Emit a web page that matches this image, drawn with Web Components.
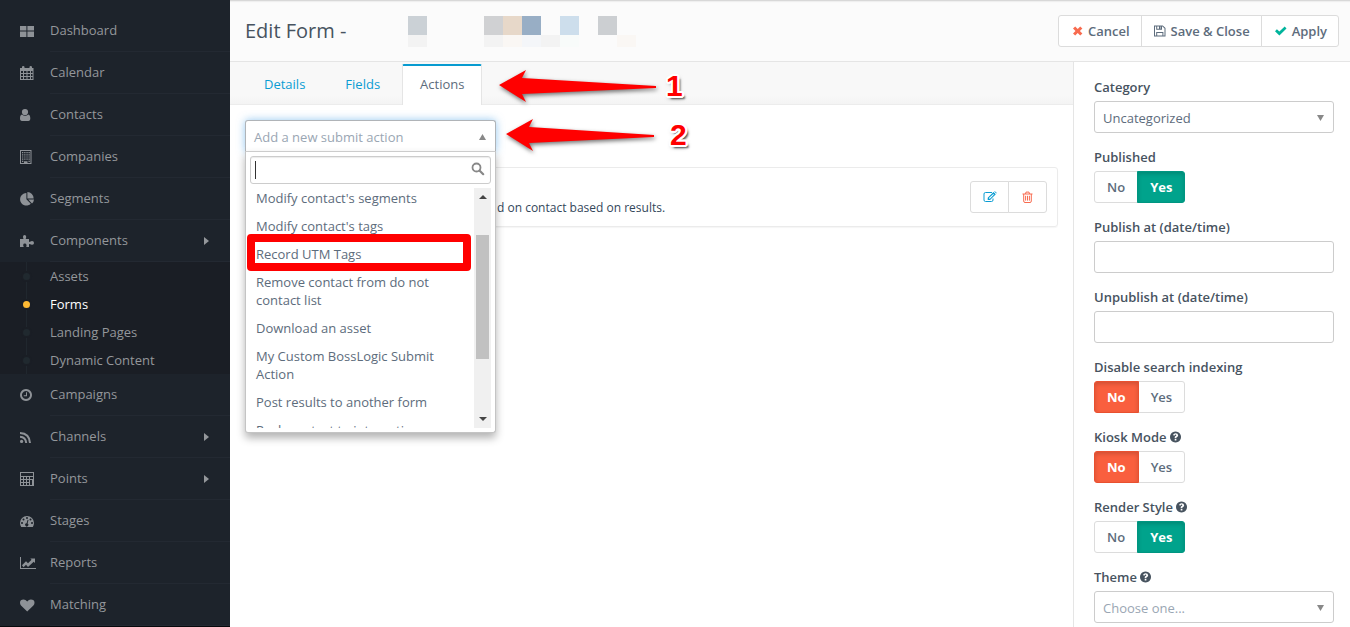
<!DOCTYPE html>
<html lang="en">
<head>
<meta charset="utf-8">
<title>Edit Form</title>
<style>
    body{
        margin:0;
        font:13px/18px "Open Sans", "Liberation Sans", sans-serif;
        color:#5d6c7c;
        background:#fff;
    }
</style>
</head>
<body>
<form-app></form-app>

<script>
const ICONS = {
    dashboard: [14,14,'<path d="M0 2h6.4v4.6H0zM7.4 2H14v4.6H7.4zM0 7.6h6.4V13H0zM7.4 7.6H14V13H7.4z"/>'],
    calendar: [14,14,'<path fill-rule="evenodd" d="M0 2h2V1q0-1 1.2-1T4.500 1v1h5V1q0-1 1.200-1T12 1v1h1.500v12H0zM1 5v2h2V5zm3 0v2h2.500V5zm3.500 0v2H10V5zM11 5v2h1.500V5zM1 8v2h2V8zm3 0v2h2.500V8zm3.500 0v2H10V8zM11 8v2h1.500V8zM1 11v2h2v-2zm3 0v2h2.500v-2zm3.500 0v2H10v-2zm3.500 0v2h1.500v-2z"/>'],
    user: [14,14,'<circle cx="5" cy="4" r="3.100"/><path d="M2 6.500C.5 6.800 0 8.500 0 10.500c0 1.500.6 2.500 2 2.500h6.300c1.400 0 2-1 2-2.500 0-2-.5-3.700-2-4A4.500 4.500 0 0 1 2 6.500z"/>'],
    building: [14,14,'<path fill-rule="evenodd" d="M0 0h11.500v14H0zM1 1v12h3v-1.800h3.500V13h3V1z"/><path d="M2 2h1.300v1.200H2zm2.200 0h1.300v1.200H4.200zm2.200 0h1.300v1.200H6.400zm2.100 0h1.300v1.200H8.500zM2 4.200h1.300v1.200H2zm2.200 0h1.300v1.200H4.200zm2.200 0h1.300v1.200H6.400zm2.100 0h1.300v1.200H8.500zM2 6.400h1.300v1.200H2zm2.200 0h1.300v1.200H4.200zm2.200 0h1.300v1.200H6.400zm2.100 0h1.300v1.200H8.500zM2 8.600h1.300v1.200H2zm2.200 0h1.300v1.200H4.200zm2.200 0h1.300v1.200H6.400zm2.100 0h1.300v1.200H8.500zM2 10.800h1.300V12H2zm6.500 0h1.300V12H8.500z"/>'],
    pie: [14,14,'<path d="M6.400 1v6.300l4.400 4.500A6.300 6.300 0 1 1 6.400 1z"/><path d="M7.400 0A6.400 6.400 0 0 1 13.700 6.400H7.400z"/><path d="M8.200 7.400H14a6 6 0 0 1-2 4z"/>'],
    puzzle: [14,14,'<path d="M0 5h3.600Q3 4 3 2.800 3 1 4.600 1T6.200 2.800Q6.200 4 5.600 5H9v3q1-.5 1.500-.5L12 7q2 0 2 2t-2 1.800q-1.500 0-2-.8-1-.4-1 .5V13H6.200q.5-1 .3-2-.2-1.400-1.700-1.400T3.200 11q0 1 .6 2H0z"/>'],
    clock: [14,14,'<path fill-rule="evenodd" d="M6 1a6 6 0 1 0 .01 0zm0 2a4 4 0 1 1-.01 0zM6 4.200v3H3.800v1H7v-4z"/>'],
    rss: [14,14,'<circle cx="1.600" cy="11.400" r="1.600"/><path fill="none" stroke="currentColor" stroke-width="2" d="M0 6.800q5.700.4 6.200 6.200M0 3q9.500.4 10 10"/>'],
    calculator: [14,14,'<path fill-rule="evenodd" d="M0 0h14v14H0zM1 1v3h12V1zm0 4v2h2V5zm3 0v2h2V5zm3 0v2h2V5zm3 0v2h3V5zM1 8v2h2V8zm3 0v2h2V8zm3 0v2h2V8zm3 0v5h2V8zM1 11v2h2v-2zm3 0v2h2v-2zm3 0v2h2v-2z"/>'],
    gauge: [14,14,'<path fill-rule="evenodd" d="M0 9a7 7 0 0 1 14 0q0 2.200-1.200 4H1.200Q0 11.200 0 9zm2-.9a1 1 0 1 0 .01 2 1 1 0 0 0 0-2zM3.500 4.500a1 1 0 1 0 .01 2 1 1 0 0 0 0-2zM7 3a1 1 0 1 0 .01 2A1 1 0 0 0 7 3zm3.500 1.500a1 1 0 1 0 .01 2 1 1 0 0 0 0-2zM12 8.100a1 1 0 1 0 .01 2 1 1 0 0 0 0-2zM7.600 5.700l-1 3.600a1.600 1.600 0 1 0 1 .2l.9-3.500z"/>'],
    chart: [16,14,'<path d="M0 1h1v11h15v1H0z"/><path d="M2 9.200l4-4 2 2 3.500-3.500L10.300 2.500H15V7l-1.300-1.200L8 11 6 8.800l-2.500 2.500z"/>'],
    heart: [15,14,'<path d="M7.200 13.500L1 7.600Q0 6.400 0 4.800 0 1.500 3.600 1.500q2 0 3.600 2 1.600-2 3.600-2 3.700 0 3.700 3.300 0 1.600-1.100 2.800z"/>'],
    times: [10,10,'<path d="M0 2.500L2.200.5 4.700 3 7.200.5l2.200 2L6.900 5l2.500 2.500-2.200 2-2.500-2.500-2.500 2.500L0 7.500 2.500 5z"/>'],
    save: [12,12,'<path fill-rule="evenodd" d="M0 .5h8.800L11.500 3v8.500H0zm1 1v9h1.200V7h7.200v3.500h1.100V3.400L8.500 1.500H8v3.300H2.200V1.500zm2.200 0v2.300H5V1.500zm3.300 0v2.300H7V1.500zM3.200 8v2.500h5.200V8z"/>'],
    check: [12,10,'<path d="M0 5.200l1.900-1.900 2.500 2.300L9.700.5l1.800 1.900-7.100 7.100z"/>'],
    edit: [14,12,'<path fill="none" stroke="currentColor" d="M9 1.500H2.500q-1.500 0-1.500 1.500v6q0 1.500 1.500 1.500h6q1.500 0 1.500-1.500V7.500"/><path fill-rule="evenodd" d="M4.700 9V6.700L10.500 1l2.300 2.200L7 9zm1.200-1.900.8.800 4.300-4.300-.7-.7zM11.200.4q.5-.5 1 0l1.200 1.200q.5.500 0 1z"/>'],
    trash: [12,12,'<path fill="none" stroke="currentColor" d="M.5 3h10M3.500 3l.5-1.900h3L7.500 3M1.700 3v7q0 1.500 1.300 1.500h5q1.300 0 1.300-1.500V3M3.600 4.800v4.800M5.500 4.800v4.800M7.400 4.800v4.800"/>'],
    question: [12,12,'<path fill-rule="evenodd" d="M5.500.5a5.500 5.500 0 1 0 .01 0zM3 4Q3.700 2.200 5.600 2.200q2.400.1 2.600 2.200Q8.200 5.500 6.400 6.400v.8H4.700V6.400q0-.8 1-1.300.7-.4.600-.9-.3-.9-1.300-.4l-.7.900zM4.700 8h1.700v1.600H4.700z"/>'],
    search: [14,14,'<circle cx="5.500" cy="5.500" r="4" fill="none" stroke="currentColor" stroke-width="1.800"/><path stroke="currentColor" stroke-width="2.200" stroke-linecap="round" d="M8.700 8.700l3.500 3.500"/>'],
    right: [5,8,'<path d="M0 0l5 4-5 4z"/>'],
    down: [7,6,'<path d="M0 0h7L3.500 6z"/>'],
    up: [7,6,'<path d="M0 6h7L3.500 0z"/>']
};

class AppIcon extends HTMLElement {
    constructor(){
        super();
        this.attachShadow({mode:'open'});
    }
    connectedCallback(){
        const [w, h, body] = ICONS[this.getAttribute('name')];
        this.shadowRoot.innerHTML = `
            <style>
                :host{ display:inline-flex; flex:none; }
                svg{ display:block; fill:currentColor; }
            </style>
            <svg width="${w}" height="${h}" viewBox="0 0 ${w} ${h}" aria-hidden="true">${body}</svg>`;
    }
}
customElements.define('app-icon', AppIcon);

const MENU = [
    ['dashboard', 'Dashboard'],
    ['calendar', 'Calendar'],
    ['user', 'Contacts'],
    ['building', 'Companies'],
    ['pie', 'Segments'],
    ['puzzle', 'Components', ['Assets', 'Forms', 'Landing Pages', 'Dynamic Content']],
    ['clock', 'Campaigns'],
    ['rss', 'Channels', []],
    ['calculator', 'Points', []],
    ['gauge', 'Stages'],
    ['chart', 'Reports'],
    ['heart', 'Matching']
];

class SideMenu extends HTMLElement {
    constructor(){
        super();
        this.attachShadow({mode:'open'});
        const items = MENU.map(([icon, label, children]) => `
            <li>
                <a class="top" href="#">
                    <app-icon name="${icon}"></app-icon>
                    <span class="label">${label}${children ? '<app-icon name="right"></app-icon>' : ''}</span>
                </a>
                ${children && children.length ? `<ul class="sub">${children.map(c =>
                    `<li><a href="#" class="${c === 'Forms' ? 'active' : ''}"><i></i>${c}</a></li>`).join('')}</ul>` : ''}
            </li>`).join('');
        this.shadowRoot.innerHTML = `
            <style>
                :host{
                    display:block;
                    box-sizing:border-box;
                    background:#1d232b;
                    border-bottom:1px solid #07090c;
                    padding-top:10px;
                    color:#94979b;
                }
                ul{ list-style:none; margin:0; padding:0; }
                a{ color:inherit; text-decoration:none; display:flex; align-items:center; }
                .top{ padding-left:20px; height:42px; }
                .top > app-icon{ width:30px; color:#8e9297; }
                .label{
                    flex:1;
                    display:flex;
                    justify-content:space-between;
                    align-items:center;
                    line-height:41px;
                    padding-right:21px;
                    border-bottom:1px solid #232932;
                }
                .sub{ background:#1a1e25; }
                .sub a{ height:28px; padding-left:23px; gap:20px; position:relative; }
                .sub a::before{
                    content:"";
                    position:absolute;
                    left:26px;
                    top:0;
                    bottom:0;
                    width:1px;
                    background:#20272e;
                }
                .sub i{
                    width:7px;
                    height:7px;
                    border-radius:50%;
                    background:#20292f;
                    box-shadow:0 0 0 2px #1a1e25;
                    z-index:1;
                }
                .sub .active{ color:#fff; }
                .sub .active i{ background:#fdb933; }
                /* the last row sits flush with the window edge */
                nav{ margin-bottom:-1px; }
            </style>
            <nav><ul>${items}</ul></nav>`;
    }
}
customElements.define('side-menu', SideMenu);

class PageHeader extends HTMLElement {
    constructor(){
        super();
        this.attachShadow({mode:'open'});
        this.shadowRoot.innerHTML = `
            <style>
                :host{
                    display:flex;
                    justify-content:space-between;
                    align-items:center;
                    height:61px;
                    padding:0 11px 0 15px;
                    background:#fbfbfb;
                    border-bottom:1px solid #e5e5e5;
                    box-shadow:inset 0 3px 2px -2px #ccc;
                }
                .title{ display:flex; align-items:center; gap:62px; }
                h1{ margin:0; font-size:20px; line-height:28px; font-weight:400; color:#47535f; }
                .mask{ display:block; margin-top:1px; }
                .group{ display:flex; }
                button{
                    display:flex;
                    align-items:center;
                    gap:5px;
                    height:32px;
                    padding:0 11px 0 12px;
                    margin:0 0 0 -1px;
                    font:inherit;
                    font-weight:600;
                    color:#5d6c7c;
                    background:#fff;
                    border:1px solid #dcdcdc;
                }
                button:first-child{ border-radius:3px 0 0 3px; padding-left:14px; }
                button:last-child{ border-radius:0 3px 3px 0; padding-left:13px; }
                .red{ color:#f86b4f; }
                .green{ color:#00b49c; }
            </style>
            <div class="title">
                <h1>Edit Form -</h1>
                <svg class="mask" width="228" height="31" viewBox="0 0 228 31" shape-rendering="crispEdges" aria-hidden="true">
                    <path fill="#cbd1d6" d="M0 0h19v19H0z"/>
                    <path fill="#d0d1d3" d="M76 0h19v19H76z"/>
                    <path fill="#e7d8c9" d="M95 0h19v19H95z"/>
                    <path fill="#98aec5" d="M114 0h19v19h-19z"/>
                    <path fill="#cddeec" d="M152 0h19v19h-19z"/>
                    <path fill="#cccfd2" d="M190 0h19v19h-19z"/>
                    <path fill="#f3f3f3" d="M0 19h19v12H0zM76 19h19v12H76zM133 19h19v12h-19z"/>
                    <path fill="#faf7f4" d="M95 19h19v12H95zM209 19h19v12h-19z"/>
                    <path fill="#f4f6f9" d="M114 19h19v12h-19z"/>
                    <path fill="#f8fbfa" d="M152 19h19v12h-19z"/>
                </svg>
            </div>
            <div class="group">
                <button type="button"><app-icon class="red" name="times"></app-icon>Cancel</button>
                <button type="button"><app-icon name="save"></app-icon>Save &amp; Close</button>
                <button type="button"><app-icon class="green" name="check"></app-icon>Apply</button>
            </div>`;
    }
}
customElements.define('page-header', PageHeader);

class TabBar extends HTMLElement {
    constructor(){
        super();
        this.attachShadow({mode:'open'});
        this.shadowRoot.innerHTML = `
            <style>
                :host{
                    display:flex;
                    gap:4px;
                    align-items:flex-end;
                    height:42px;
                    padding:0 16px;
                    background:linear-gradient(#f8f8f8 80%, #f4f4f4);
                    border-bottom:1px solid #ececec;
                }
                a{
                    box-sizing:border-box;
                    height:40px;
                    padding:9px 17px 0;
                    border:1px solid transparent;
                    border-top-width:2px;
                    color:#0a9dd3;
                    text-decoration:none;
                    border-bottom:0;
                }
                a[aria-current]{
                    color:#5d6c7c;
                    background:#fff;
                    border-color:#089bd0 #e5e5e5;
                    border-radius:2px 2px 0 0;
                    margin-bottom:-1px;
                    height:41px;
                }
            </style>
            <a href="#details">Details</a>
            <a href="#fields">Fields</a>
            <a href="#actions" aria-current="page">Actions</a>`;
    }
}
customElements.define('tab-bar', TabBar);

const ACTIONS = [
    "Modify contact's segments",
    "Modify contact's tags",
    'Record UTM Tags',
    'Remove contact from do not contact list',
    'Download an asset',
    'My Custom BossLogic Submit Action',
    'Post results to another form',
    'Push contact to integration'
];

class ActionPicker extends HTMLElement {
    constructor(){
        super();
        this.attachShadow({mode:'open'});
        this.shadowRoot.innerHTML = `
            <style>
                :host{ display:block; position:relative; width:251px; }
                .trigger{
                    box-sizing:border-box;
                    display:flex;
                    width:100%;
                    height:32px;
                    justify-content:space-between;
                    align-items:center;
                    padding:2px 9px 0 8px;
                    font:inherit;
                    color:#9aa6b3;
                    background:#fff;
                    border:1px solid #b0b4b8;
                    border-bottom-color:#ccc;
                    border-radius:3px 3px 0 0;
                    box-shadow:0 0 8px rgba(102,175,233,.7);
                }
                .trigger app-icon{ color:#888; }
                .drop{
                    position:absolute;
                    z-index:2;
                    top:31px;
                    left:0;
                    right:0;
                    box-sizing:border-box;
                    padding:4px;
                    background:#fff;
                    border:1px solid #c4c4c4;
                    border-top-color:#ccc;
                    border-radius:0 0 3px 3px;
                    box-shadow:0 5px 8px rgba(0,0,0,.3);
                }
                .search{
                    display:flex;
                    align-items:center;
                    height:26px;
                    border:1px solid #ccc;
                    border-radius:3px;
                    padding:0 5px 0 4px;
                    box-shadow:inset 0 1px 1px rgba(0,0,0,.08);
                }
                .search i{ width:1px; height:18px; background:#333; }
                .search app-icon{ color:#888; margin-bottom:3px; }
                input{ flex:1; min-width:0; border:0; outline:0; background:none; font:inherit; }
                .results{ display:flex; height:240px; margin-top:4px; overflow:hidden; }
                ul{ flex:1; list-style:none; margin:-4px 0 0; padding:0; }
                li{ padding:5px 6px; }
                .bar{
                    box-sizing:border-box;
                    width:17px;
                    padding:6px 2px;
                    background:#f0f0f0;
                    display:flex;
                    flex-direction:column;
                    align-items:center;
                    justify-content:space-between;
                    color:#444;
                }
                .thumb{ width:13px; height:124px; background:#c1c1c1; margin-bottom:22px; }
                .bar svg{ fill:currentColor; }
            </style>
            <button class="trigger" type="button" aria-haspopup="listbox" aria-expanded="true">
                Add a new submit action<app-icon name="up"></app-icon>
            </button>
            <div class="drop">
                <div class="search">
                    <i></i>
                    <input type="text" aria-label="Search actions">
                    <app-icon name="search"></app-icon>
                </div>
                <div class="results">
                    <ul role="listbox">${ACTIONS.map(a => `<li role="option">${a}</li>`).join('')}</ul>
                    <div class="bar" aria-hidden="true">
                        <svg width="8" height="5"><path d="M0 5h8L4 1z"/></svg>
                        <div class="thumb"></div>
                        <svg width="8" height="5"><path d="M0 0h8L4 4z"/></svg>
                    </div>
                </div>
            </div>`;
    }
}
customElements.define('action-picker', ActionPicker);

class ActionCard extends HTMLElement {
    constructor(){
        super();
        this.attachShadow({mode:'open'});
        this.shadowRoot.innerHTML = `
            <style>
                :host{
                    display:flex;
                    align-items:center;
                    justify-content:space-between;
                    height:58px;
                    padding:0 10px 0 251px;
                    border:1px solid #ebebeb;
                    border-radius:3px;
                    box-shadow:0 1px 1px rgba(0,0,0,.04);
                }
                p{ margin:22px 0 0; font-size:12px; color:#33475b; }
                .group{ display:flex; }
                button{
                    display:flex;
                    align-items:center;
                    justify-content:center;
                    width:39px;
                    height:32px;
                    padding:0;
                    background:#fff;
                    border:1px solid #dcdcdc;
                }
                .edit{ color:#0a9dd3; border-radius:3px 0 0 3px; }
                .remove{ color:#f86b4f; border-radius:0 3px 3px 0; margin-left:-1px; }
            </style>
            <p><slot></slot></p>
            <div class="group">
                <button class="edit" type="button" aria-label="Edit"><app-icon name="edit"></app-icon></button>
                <button class="remove" type="button" aria-label="Delete"><app-icon name="trash"></app-icon></button>
            </div>`;
    }
}
customElements.define('action-card', ActionCard);

// type: select | text | toggle
class FormField extends HTMLElement {
    constructor(){
        super();
        this.attachShadow({mode:'open'});
    }
    connectedCallback(){
        const type = this.getAttribute('type');
        const label = this.getAttribute('label');
        const value = this.getAttribute('value') || '';
        const help = this.hasAttribute('help') ? '<app-icon name="question"></app-icon>' : '';
        let head = `<label class="head" for="f">${label}${help}</label>`;
        let control = '<input class="box" id="f" type="text">';
        if (type === 'select'){
            control = `<div class="select">
                <select class="box ${this.hasAttribute('empty') ? 'empty' : ''}" id="f"><option>${value}</option></select>
                <app-icon name="down"></app-icon>
            </div>`;
        }
        if (type === 'toggle'){
            head = `<div class="head" id="t">${label}${help}</div>`;
            control = `<div class="toggle" role="radiogroup" aria-labelledby="t">${['No', 'Yes'].map(v => `
                <label class="${v.toLowerCase()}"><input type="radio" name="v" ${v === value ? 'checked' : ''}>${v}</label>`).join('')}
            </div>`;
        }
        this.shadowRoot.innerHTML = `
            <style>
                :host{ display:flex; flex-direction:column; gap:5px; }
                .head{ display:flex; align-items:center; gap:3px; font-weight:600; color:#47535f; }
                .box{
                    box-sizing:border-box;
                    width:100%;
                    height:32px;
                    padding:2px 8px 0;
                    font:inherit;
                    color:#5d6c7c;
                    background:#fff;
                    border:1px solid #ccc;
                    border-radius:3px;
                    appearance:none;
                    display:block;
                }
                .empty{ color:#9aa6b3; }
                .select{ display:grid; align-items:center; }
                .select > *{ grid-area:1/1; }
                .select app-icon{ justify-self:end; margin:2px 10px 0 0; color:#888; pointer-events:none; }
                .toggle{ display:flex; }
                .toggle label{
                    box-sizing:border-box;
                    height:32px;
                    padding:0 12px;
                    line-height:30px;
                    border:1px solid #dcdcdc;
                    font-weight:600;
                }
                .toggle input{ position:absolute; opacity:0; margin:0; }
                .no{ border-radius:3px 0 0 3px; }
                .yes{ border-radius:0 3px 3px 0; margin-left:-1px; }
                .toggle label:has(:checked){
                    color:#fff;
                    font-weight:700;
                    box-shadow:inset 0 2px 4px rgba(0,0,0,.16);
                }
                .no:has(:checked){ background:#f95f3e; border-color:#e9502f; z-index:1; }
                .yes:has(:checked){ background:#00a38c; border-color:#009681; }
            </style>
            ${head}${control}`;
    }
}
customElements.define('form-field', FormField);

// Tutorial marks laid over the page: numbered arrows and a highlight box
class CalloutArrow extends HTMLElement {
    constructor(){
        super();
        this.attachShadow({mode:'open'});
    }
    connectedCallback(){
        const w = Number(this.getAttribute('length'));
        this.shadowRoot.innerHTML = `
            <style>
                :host{ display:flex; align-items:center; position:absolute; z-index:3; }
                svg{ display:block; filter:drop-shadow(1px 2px 2px rgba(0,0,0,.55)); overflow:visible; }
                span{
                    font:bold 30px/32px "Liberation Sans", sans-serif;
                    color:#f00;
                    text-shadow:
                        2px 0 #fff, -2px 0 #fff, 0 2px #fff, 0 -2px #fff,
                        2px 1px #fff, -2px 1px #fff, 2px -1px #fff, -2px -1px #fff,
                        1px 2px #fff, -1px 2px #fff, 1px -2px #fff, -1px -2px #fff,
                        3px 3px 2px rgba(0,0,0,.6), 1px 2px 4px rgba(0,0,0,.5);
                }
            </style>
            <svg width="${w}" height="32" viewBox="0 0 ${w} 32" aria-hidden="true">
                <path fill="#f00" d="M0 15L27 0l-4 8L${w} 16v2L23 24l4 8z"/>
            </svg>
            <span><slot></slot></span>`;
    }
}
customElements.define('callout-arrow', CalloutArrow);

class FormApp extends HTMLElement {
    constructor(){
        super();
        this.attachShadow({mode:'open'});
        this.shadowRoot.innerHTML = `
            <style>
                :host{
                    display:grid;
                    grid-template-columns:230px 1fr;
                    min-height:100vh;
                    position:relative;
                }
                main{ display:flex; flex-direction:column; min-width:0; }
                .columns{ flex:1; display:grid; grid-template-columns:1fr 277px; }
                .content{ padding:15px 15px 0; }
                action-card{ margin-top:15px; }
                aside{
                    box-sizing:border-box;
                    display:flex;
                    flex-direction:column;
                    gap:15px;
                    padding:16px 16px 4px 20px;
                    border-left:1px solid #e5e5e5;
                }
                .mark-1{ left:499px; top:70px; gap:10px; }
                .mark-2{ left:506px; top:119px; gap:16px; }
                .highlight{
                    position:absolute;
                    z-index:3;
                    left:247px;
                    top:234px;
                    box-sizing:border-box;
                    width:224px;
                    height:37px;
                    border:8px solid #f00;
                    border-radius:4px;
                }
            </style>
            <side-menu></side-menu>
            <main>
                <page-header></page-header>
                <div class="columns">
                    <section>
                        <tab-bar></tab-bar>
                        <div class="content">
                            <action-picker></action-picker>
                            <action-card>d on contact based on results.</action-card>
                        </div>
                    </section>
                    <aside>
                        <form-field type="select" label="Category" value="Uncategorized"></form-field>
                        <form-field type="toggle" label="Published" value="Yes"></form-field>
                        <form-field type="text" label="Publish at (date/time)"></form-field>
                        <form-field type="text" label="Unpublish at (date/time)"></form-field>
                        <form-field type="toggle" label="Disable search indexing" value="No"></form-field>
                        <form-field type="toggle" label="Kiosk Mode" value="No" help></form-field>
                        <form-field type="toggle" label="Render Style" value="Yes" help></form-field>
                        <form-field type="select" label="Theme" value="Choose one..." empty help></form-field>
                    </aside>
                </div>
            </main>
            <callout-arrow class="mark-1" length="157">1</callout-arrow>
            <callout-arrow class="mark-2" length="148">2</callout-arrow>
            <div class="highlight"></div>`;
    }
}
customElements.define('form-app', FormApp);
</script>
</body>
</html>
